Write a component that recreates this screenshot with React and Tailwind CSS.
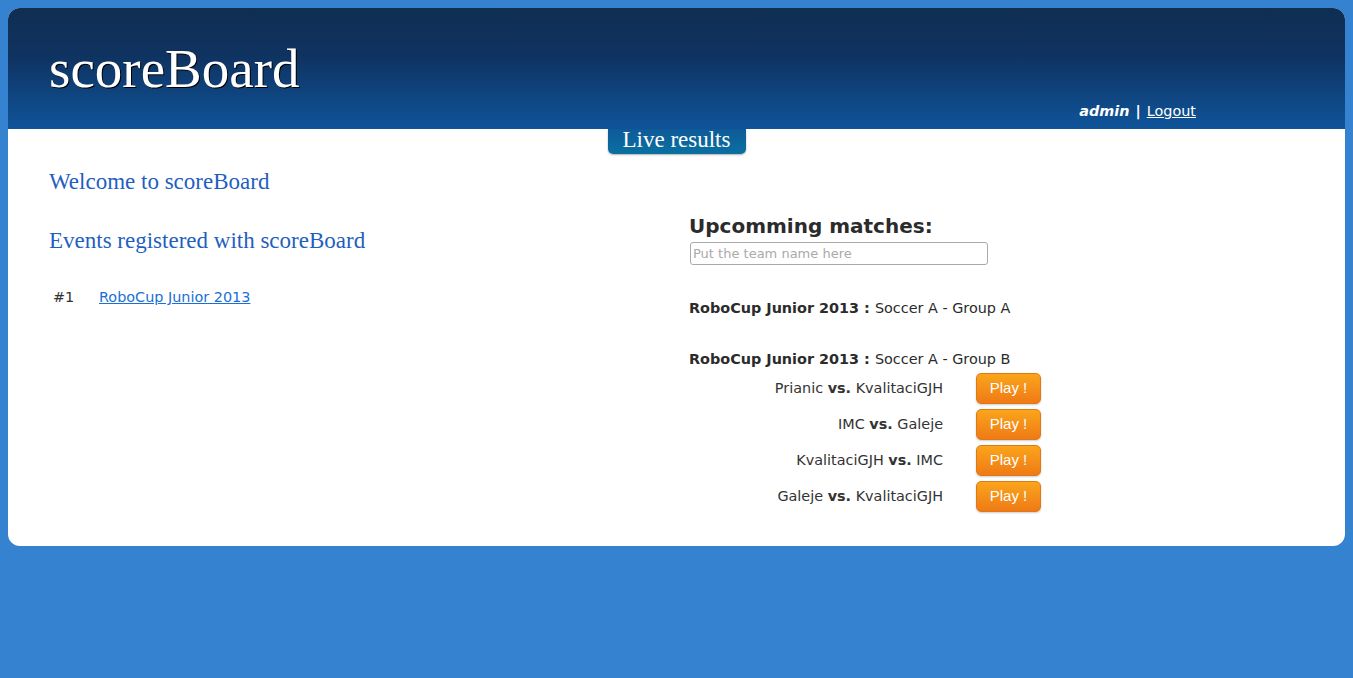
export default function App() {
  const matches = [
    ["Prianic", "KvalitaciGJH"],
    ["IMC", "Galeje"],
    ["KvalitaciGJH", "IMC"],
    ["Galeje", "KvalitaciGJH"],
  ];
  return (
    <div className="min-h-[678px] bg-[#3583d0] p-2 font-['DejaVu_Sans',sans-serif]">
      <div className="rounded-xl bg-white overflow-hidden">
        <div className="h-[121px] bg-[linear-gradient(to_bottom,#0f2e52_0%,#0f3361_40%,#0f549a_100%)] relative">
          <div className="absolute left-[41px] top-[33px] text-[55px] leading-none text-white font-['Liberation_Serif',serif] [text-shadow:1px_1px_0_#000]">scoreBoard</div>
          <div className="absolute right-[149px] top-[93px] text-[14.4px] text-white">
            <span className="font-bold italic">admin</span>
            <span className="font-bold mx-[6px]">|</span>
            <a href="#" className="underline">Logout</a>
          </div>
        </div>
        <div className="relative pb-[34px]">
          <div className="flex justify-center">
            <div className="h-[25px] w-[138px] rounded-b-[5px] bg-[linear-gradient(to_bottom,#0e5a98,#0a70a2)] text-white text-[23px] leading-[22px] text-center font-['Liberation_Serif',serif] shadow-[0_1px_2px_rgba(0,0,0,0.3)]">Live results</div>
          </div>
          <div className="flex">
            <div className="w-[681px] pl-[41px]">
              <h2 className="text-[#1f5fbf] text-[23px] leading-[26px] mt-[15px] font-['Liberation_Serif',serif]">Welcome to scoreBoard</h2>
              <h2 className="text-[#1f5fbf] text-[23px] leading-[26px] mt-[33px] font-['Liberation_Serif',serif]">Events registered with scoreBoard</h2>
              <div className="flex text-[14.4px] mt-[33px] text-[#333]">
                <span className="w-[50px] pl-[4px]">#1</span>
                <a href="#" className="text-[#1a6fd8] underline">RoboCup Junior 2013</a>
              </div>
            </div>
            <div className="flex-1 pt-[60px]">
              <h3 className="text-[20px] font-bold text-[#2b2b2b] leading-[24px]">Upcomming matches:</h3>
              <input placeholder="Put the team name here" className="mt-[4px] ml-[1px] w-[298px] h-[23px] border border-[#aaa] rounded-[3px] px-[2px] text-[13px] placeholder:text-[#aaa] outline-none block" />
              <div className="mt-[33px] text-[14.4px] text-[#2b2b2b]">
                <span className="font-bold">RoboCup Junior 2013 : </span>Soccer A - Group A
              </div>
              <div className="mt-[29px] text-[14.4px] text-[#2b2b2b]">
                <span className="font-bold">RoboCup Junior 2013 : </span>Soccer A - Group B
              </div>
              <div className="flex flex-col gap-[5px] mt-[3px]">
                {matches.map(([a, b], i) => (
                  <div key={i} className="flex items-center">
                    <div className="w-[254px] text-right text-[14.4px] text-[#333]">
                      {a} <span className="font-bold">vs.</span> {b}
                    </div>
                    <button className="ml-[33px] w-[65px] h-[31px] rounded-[5px] border border-[#e0781a] bg-[linear-gradient(to_bottom,#faa51b,#ef7a16)] text-white text-[15px] font-['Liberation_Sans',sans-serif] shadow-[0_1px_2px_rgba(0,0,0,0.2)]">Play !</button>
                  </div>
                ))}
              </div>
            </div>
          </div>
        </div>
      </div>
    </div>
  );
}
